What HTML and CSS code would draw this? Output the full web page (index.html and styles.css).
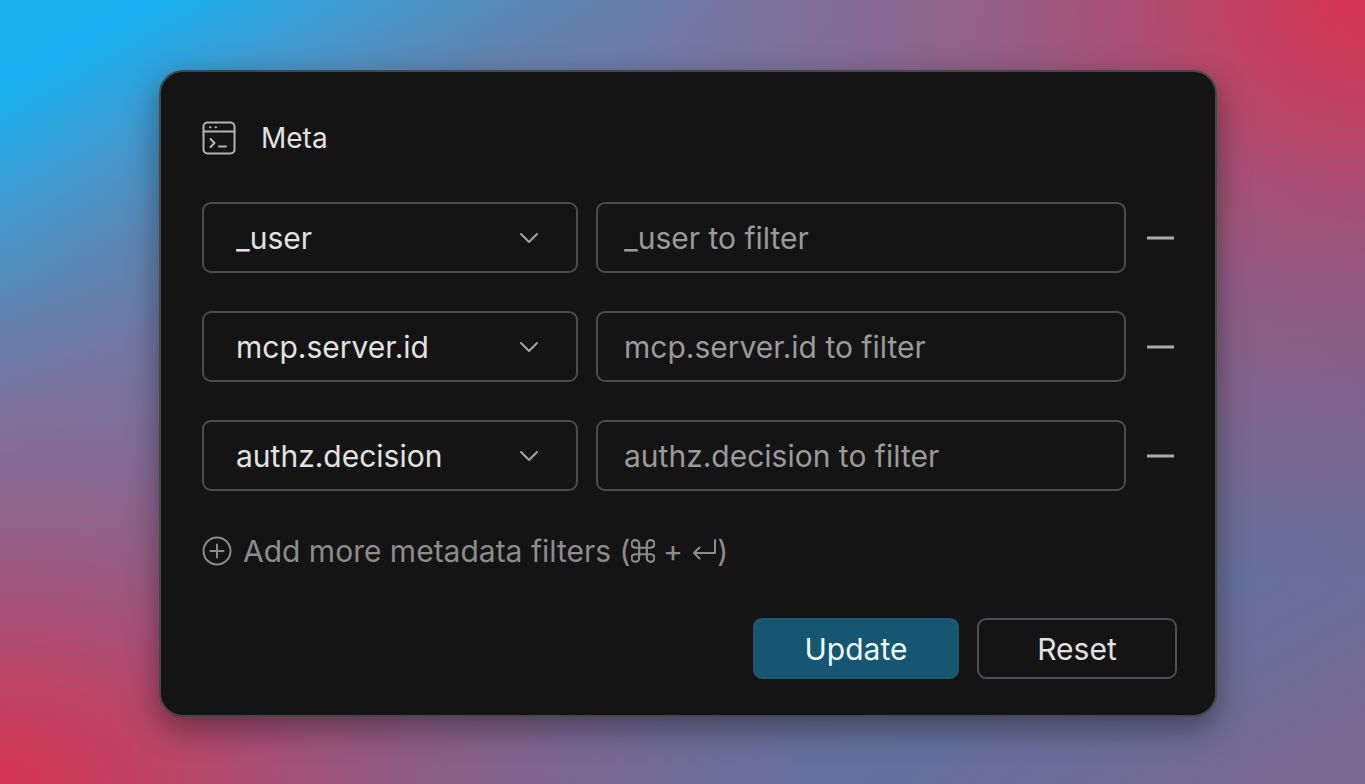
FILE: index.html
```
<!DOCTYPE html>
<html lang="en">
<head>
    <meta charset="UTF-8">
    <meta name="viewport" content="width=device-width, initial-scale=1.0">
    <title>Meta filters</title>
    <link rel="stylesheet" href="styles.css">
</head>
<body>
    <form class="card">
        <header class="card-header">
            <svg class="header-icon" viewBox="0 0 34 34" aria-hidden="true">
                <rect x="1.500" y="1.500" width="31" height="31" rx="4"/>
                <path d="M1.500 10.500h31"/>
                <path d="M8.500 18l4 4-4 4M17 25.500h7"/>
                <path d="M8 6.200h.5M13.500 6.200h.5"/>
            </svg>
            <h1>Meta</h1>
        </header>

        <div class="filters">
            <div class="filter-row">
                <div class="select-wrap">
                    <select class="field" aria-label="Metadata key 1">
                        <option selected>_user</option>
                        <option>mcp.server.id</option>
                        <option>authz.decision</option>
                    </select>
                    <svg class="chevron" viewBox="0 0 20 12" aria-hidden="true"><path d="M2 2l8 8 8-8"/></svg>
                </div>
                <input class="field" type="text" placeholder="_user to filter" aria-label="_user value">
                <button class="remove-btn" type="button" aria-label="Remove _user filter">
                    <svg viewBox="0 0 27 4" aria-hidden="true"><path d="M0 2h27"/></svg>
                </button>
            </div>

            <div class="filter-row">
                <div class="select-wrap">
                    <select class="field" aria-label="Metadata key 2">
                        <option>_user</option>
                        <option selected>mcp.server.id</option>
                        <option>authz.decision</option>
                    </select>
                    <svg class="chevron" viewBox="0 0 20 12" aria-hidden="true"><path d="M2 2l8 8 8-8"/></svg>
                </div>
                <input class="field" type="text" placeholder="mcp.server.id to filter" aria-label="mcp.server.id value">
                <button class="remove-btn" type="button" aria-label="Remove mcp.server.id filter">
                    <svg viewBox="0 0 27 4" aria-hidden="true"><path d="M0 2h27"/></svg>
                </button>
            </div>

            <div class="filter-row">
                <div class="select-wrap">
                    <select class="field" aria-label="Metadata key 3">
                        <option>_user</option>
                        <option>mcp.server.id</option>
                        <option selected>authz.decision</option>
                    </select>
                    <svg class="chevron" viewBox="0 0 20 12" aria-hidden="true"><path d="M2 2l8 8 8-8"/></svg>
                </div>
                <input class="field" type="text" placeholder="authz.decision to filter" aria-label="authz.decision value">
                <button class="remove-btn" type="button" aria-label="Remove authz.decision filter">
                    <svg viewBox="0 0 27 4" aria-hidden="true"><path d="M0 2h27"/></svg>
                </button>
            </div>
        </div>

        <button class="add-btn" type="button">
            <svg class="plus-icon" viewBox="0 0 30 30" aria-hidden="true">
                <circle cx="15" cy="15" r="13.500"/>
                <path d="M15 8.500v13M8.500 15h13"/>
            </svg>
            <span>Add more metadata filters (<svg class="key-icon cmd" viewBox="1 1 22 22" aria-label="Command"><path d="M15.500 5.500v13a3.500 3.500 0 1 0 3.500-3.500H5a3.500 3.500 0 1 0 3.500 3.500v-13A3.500 3.500 0 1 0 5 9h14a3.500 3.500 0 1 0-3.500-3.500"/></svg> + <svg class="key-icon enter" viewBox="0 0 26 24" aria-label="Enter"><path d="M24 1v13H3M8.500 8.500L3 14l5.500 5.500"/></svg>)</span>
        </button>

        <footer class="card-footer">
            <button class="btn update-btn" type="submit">Update</button>
            <button class="btn reset-btn" type="reset">Reset</button>
        </footer>
    </form>
</body>
</html>
```
FILE: styles.css
```
* {
    box-sizing: border-box;
}

body {
    font-family: Inter, "Liberation Sans", sans-serif;
    font-size: 30px;
    line-height: 36px;
    margin: 0;
    min-height: 100vh;
    padding: 70px 148px 68px 159px;
    /* Red glow in two corners over a blue to purple base */
    background:
        radial-gradient(ellipse 54% 75% at 100% 0, rgb(214, 51, 82) 0%, rgba(214, 51, 82, 0.8) 17%, rgba(214, 51, 82, 0.55) 34%, rgba(214, 51, 82, 0.35) 52%, rgba(214, 51, 82, 0.15) 76%, rgba(214, 51, 82, 0) 100%),
        radial-gradient(ellipse 58% 64% at 0 100%, rgb(214, 51, 82) 0%, rgba(214, 51, 82, 0.75) 20%, rgba(214, 51, 82, 0.5) 38%, rgba(214, 51, 82, 0.3) 55%, rgba(214, 51, 82, 0.12) 76%, rgba(214, 51, 82, 0) 100%),
        linear-gradient(to bottom right, #18b2ee 0%, #18b0ee 6%, #4498cc 14%, #5f84b0 21%, #6e7aa6 27%, #70759f 50%, #66709c 82%, #7c6891 100%);
    color: #e2e2e2;
}

svg {
    fill: none;
    stroke: currentColor;
    stroke-width: 2;
    stroke-linecap: round;
    stroke-linejoin: round;
}

.card {
    padding: 48px 38px 36px 41px;
    background: #141414;
    border: 2px solid #454748;
    border-radius: 24px;
    box-shadow: 0 12px 32px rgba(0, 0, 0, 0.4);
}

.card-header {
    display: flex;
    align-items: center;
    gap: 25px;
}

.card-header h1 {
    margin: 0;
    font-size: 28px;
    font-weight: 400;
}

.header-icon {
    width: 34px;
    height: 34px;
    color: #b4b4b4;
}

.filters {
    display: flex;
    flex-direction: column;
    gap: 38px;
    margin-top: 46px;
}

.filter-row {
    display: grid;
    grid-template-columns: 376fr 530fr 33px;
    column-gap: 18px;
    align-items: center;
}

.select-wrap {
    position: relative;
}

.field {
    display: block;
    width: 100%;
    height: 71px;
    padding: 0 26px;
    font: inherit;
    color: #e2e2e2;
    background: transparent;
    border: 2px solid #4a4c4d;
    border-radius: 9px;
    appearance: none;
}

select.field {
    padding-left: 32px;
}

.field option {
    background: #141414;
}

.field::placeholder {
    color: #9a9a9a;
    opacity: 1;
}

/* Sits over the select */
.chevron {
    position: absolute;
    top: 30px;
    right: 39px;
    width: 20px;
    height: 12px;
    color: #a4a4a4;
    pointer-events: none;
}

button {
    font: inherit;
    cursor: pointer;
}

.remove-btn {
    display: flex;
    padding: 16px 3px;
    color: #acacac;
    background: none;
    border: none;
}

.remove-btn svg {
    width: 27px;
    height: 4px;
    stroke-width: 3;
}

.add-btn {
    display: flex;
    align-items: center;
    gap: 11px;
    margin-top: 42px;
    padding: 0;
    color: #8c8c8c;
    background: none;
    border: none;
}

.plus-icon {
    width: 30px;
    height: 30px;
}

.key-icon {
    height: 24px;
    vertical-align: -1px;
}

.cmd {
    width: 24px;
}

.enter {
    width: 26px;
}

.card-footer {
    display: flex;
    justify-content: flex-end;
    gap: 18px;
    margin-top: 49px;
}

.btn {
    height: 61px;
    padding: 0 48px;
    border-radius: 9px;
}

.update-btn {
    min-width: 206px;
    color: #f0fafc;
    background: #155671;
    border: 2px solid #1b5a74;
}

.reset-btn {
    min-width: 200px;
    color: #e2e2e2;
    background: transparent;
    border: 2px solid #4f4f54;
}
```
